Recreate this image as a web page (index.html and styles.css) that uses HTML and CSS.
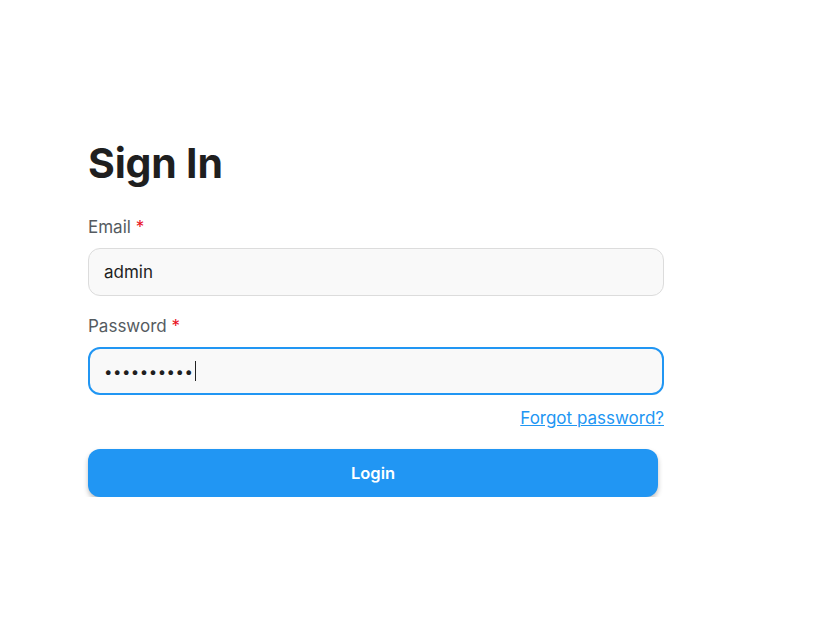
FILE: index.html
```html
<!DOCTYPE html>
<html>
<head>
<meta charset="utf-8">
<link rel="stylesheet" href="styles.css">
</head>
<body>
<div class="page">
  <form class="card">
    <h1 class="title">Sign In</h1>
    <div class="field">
      <label class="label">Email <span class="req">*</span></label>
      <div class="input">admin</div>
    </div>
    <div class="field">
      <label class="label">Password <span class="req">*</span></label>
      <div class="input focused"><span class="dots">••••••••••</span><span class="caret"></span></div>
    </div>
    <div class="forgot-row"><a class="forgot" href="#">Forgot password?</a></div>
    <button class="btn" type="button">Login</button>
  </form>
</div>
</body>
</html>
```
FILE: styles.css
```css
html, body { margin: 0; padding: 0; background: #fff; }
body { font-family: Inter, "Noto Sans", sans-serif; color: #1f1f1f; }
.page { padding: 131px 0 0 88px; }
.card { width: 576px; display: flex; flex-direction: column; }
.title { margin: 0 0 20px; font-size: 41px; font-weight: 700; line-height: 64px; color: #1f1f1f; letter-spacing: -0.2px; }
.field { display: flex; flex-direction: column; margin-bottom: 18px; }
.label { font-size: 17px; line-height: 24px; color: #555b61; margin-bottom: 9px; }
.req { color: #e8101c; }
.input { box-sizing: border-box; height: 48px; border: 1px solid #dcdcdc; border-radius: 12px; background: #f9f9f9; padding: 0 15px; display: flex; align-items: center; font-size: 17px; color: #1f1f1f; }
.input.focused { border: 2px solid #2196f3; padding: 0 14px; }
.dots { font-size: 15px; letter-spacing: 0.5px; }
.caret { display: inline-block; width: 1px; height: 20px; background: #222; margin-left: 2px; }
.forgot-row { display: flex; justify-content: flex-end; margin-top: -7px; }
.forgot { font-size: 17px; line-height: 24px; color: #2196f3; text-decoration: underline; }
.btn { margin-top: 19px; width: 570px; height: 48px; border: 0; border-radius: 12px; background: #2196f3; color: #fff; font-family: Inter, sans-serif; font-size: 16.5px; font-weight: 600; box-shadow: 0 3px 5px rgba(0,0,0,0.25); cursor: pointer; }
```
